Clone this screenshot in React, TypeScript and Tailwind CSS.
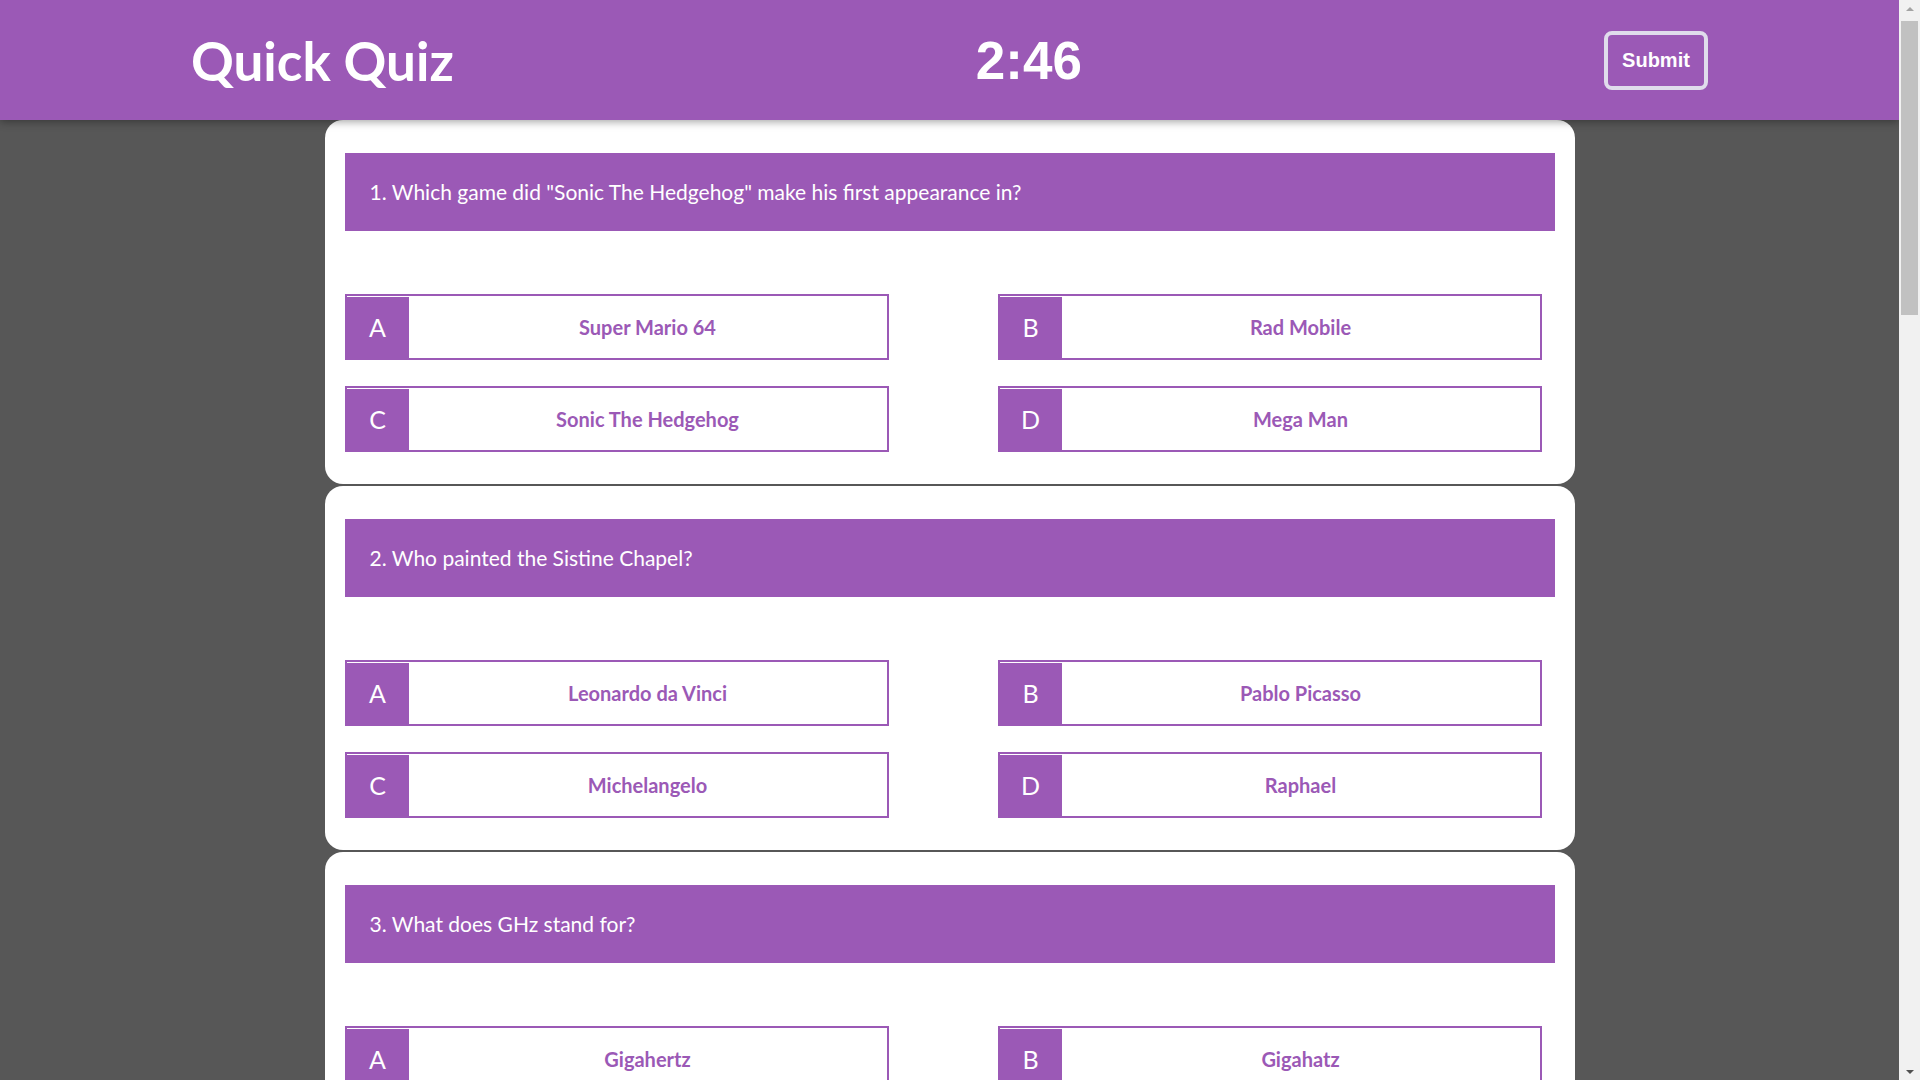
import React from "react"

type Question = {
    text: string
    options: string[]
}

const questions: Question[] = [
    { text: 'Which game did "Sonic The Hedgehog" make his first appearance in?', options: ["Super Mario 64", "Rad Mobile", "Sonic The Hedgehog", "Mega Man"] },
    { text: "Who painted the Sistine Chapel?", options: ["Leonardo da Vinci", "Pablo Picasso", "Michelangelo", "Raphael"] },
    { text: "What does GHz stand for?", options: ["Gigahertz", "Gigahatz", "Gigahotz", "Gigahetz"] },
    { text: "What is the capital of Australia?", options: ["Sydney", "Melbourne", "Canberra", "Perth"] },
    { text: "How many planets are in our solar system?", options: ["7", "8", "9", "10"] },
    { text: "Which element has the chemical symbol O?", options: ["Gold", "Osmium", "Oxygen", "Silver"] },
    { text: "Who wrote \"Romeo and Juliet\"?", options: ["Charles Dickens", "Mark Twain", "William Shakespeare", "Jane Austen"] },
    { text: "What is the largest ocean on Earth?", options: ["Atlantic Ocean", "Indian Ocean", "Pacific Ocean", "Arctic Ocean"] },
    { text: "In which year did World War II end?", options: ["1943", "1944", "1945", "1946"] },
    { text: "Which company created the PlayStation?", options: ["Nintendo", "Sega", "Sony", "Microsoft"] },
]

const letters = ["A", "B", "C", "D"]

const Option = ({ letter, label }: { letter: string; label: string }) => {
    return (
        <div className="w-[544px] h-[66px] flex border-2 border-[#9b59b6] bg-white cursor-pointer">
            <div className="w-[62px] mt-px bg-[#9b59b6] text-white text-[25px] flex items-center justify-center">
                {letter}
            </div>
            <div className="flex-1 flex items-center justify-center text-[#9b59b6] font-bold text-[20px]">
                {label}
            </div>
        </div>
    )
}

const QuestionCard = ({ index, q }: { index: number; q: Question }) => {
    return (
        <div className="w-[1250px] mx-auto bg-white rounded-[18px] pt-[33px] px-[20px] pb-[32px] mb-[2px]">
            <div className="h-[78px] bg-[#9b59b6] text-white text-[21px] flex items-center pl-[25px]">
                {index + 1}. {q.text}
            </div>
            <div className="mt-[63px] grid grid-cols-[544px_544px] justify-between pr-[13px] gap-y-[26px]">
                {q.options.map((o, i) => (
                    <Option key={i} letter={letters[i]} label={o} />
                ))}
            </div>
        </div>
    )
}

// the browser's own scrollbar is hidden in the screenshot, so draw one
const FakeScrollbar = () => (
    <div className="fixed top-0 right-0 z-20 w-[21px] h-screen bg-[#f1f1f1] flex flex-col items-center">
        <div className="h-[17px] flex items-center justify-center">
            <div className="w-0 h-0 border-x-[4px] border-x-transparent border-b-[4px] border-b-[#a3a3a3]" />
        </div>
        <div className="w-[17px] h-[294px] mt-[4px] bg-[#c1c1c1]" />
        <div className="flex-1" />
        <div className="h-[17px] flex items-center justify-center">
            <div className="w-0 h-0 border-x-[4px] border-x-transparent border-t-[4px] border-t-[#505050]" />
        </div>
    </div>
)

export default function App() {
    return (
        <div className="w-[1899px] min-h-screen bg-[#575757] font-['Source_Sans_Pro','Lato',sans-serif]">
            <header className="sticky top-0 z-10 h-[120px] bg-[#9b59b6] flex items-center justify-between px-[191px] shadow-[0_2px_8px_rgba(0,0,0,0.35)]">
                <h1 className="text-white font-bold text-[53px] leading-none">Quick Quiz</h1>
                <div className="text-white font-bold text-[53px] leading-none font-['Liberation_Sans',Arial,sans-serif]">2:46</div>
                <button className="w-[104px] h-[59px] border-4 border-[#e0dcec] rounded-lg text-white font-bold text-[20px] font-['Liberation_Sans',Arial,sans-serif]">
                    Submit
                </button>
            </header>
            <main>
                {questions.map((q, i) => (
                    <QuestionCard key={i} index={i} q={q} />
                ))}
            </main>
            <FakeScrollbar />
        </div>
    )
}
